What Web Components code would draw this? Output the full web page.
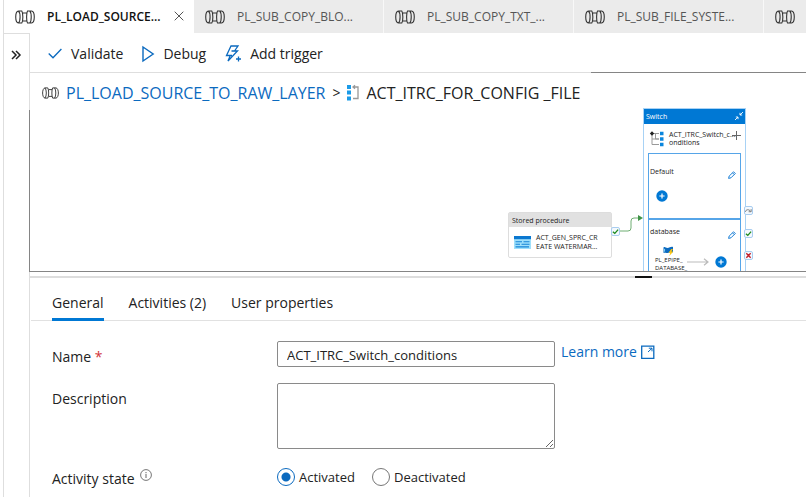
<!DOCTYPE html>
<html lang="en">
<head>
<meta charset="utf-8">
<title>Pipeline editor</title>
<style>
  body { margin: 0; font: 14px/20px "Open Sans", "Noto Sans", sans-serif; color: #222; background: #fff; --blue: #0b6abf; --line: #dedede; }
</style>
</head>
<body>
<pipeline-editor></pipeline-editor>
<script>
const ICONS = {
  pipeline: ['0 0 20 14', `<g fill="none" stroke="#333" stroke-width="1.1"><path d="M3.500 1C-.2 1.500-.2 12.500 3.500 13M3.500 1H6.800C8.200 3 8.200 11 6.800 13H3.500M3.500 1C5.600 3 5.600 11 3.500 13M8 3H12M8 11H12M16.500 1H12.500C11.300 3 11.300 11 12.500 13H16.500M14.800 1C16.700 3 16.700 11 14.800 13M16.500 1C20.200 1.500 20.200 12.500 16.500 13"/></g>`],
  close: ['0 0 10 10', `<path d="M.7.7 9.300 9.300M9.300.7.7 9.300" stroke="#555" fill="none"/>`],
  chevrons: ['0 0 10 10', `<path d="M1 1 5 5 1 9M5 1 9 5 5 9" stroke="#222" stroke-width="1.500" fill="none"/>`],
  check: ['0 0 14 11', `<path d="M.7 5.500 5 9.800 13.400 1" stroke="#0b6abf" stroke-width="1.300" fill="none"/>`],
  play: ['0 0 12 16', `<path d="M1 1V15L11.200 8Z" stroke="#0b6abf" stroke-width="1.400" fill="none"/>`],
  trigger: ['0 0 16 18', `<path d="M6 1H13L9.500 6H12.500L3 16 5.300 10.500H1.500ZM6.500 6H9.500M4 10.500H7M11 14H16M13.500 11.500V16.500" stroke="#0b6abf" stroke-width="1.300" fill="none"/>`],
  loop: ['0 0 12 16', `<path d="M0 0H4V4H0ZM0 5.500H4V9.500H0ZM0 11.500H4V15.500H0Z" fill="#1b9be8"/><path d="M6 2H11V13.500H6M8 .3 6 2 8 3.700" stroke="#999" stroke-width="1.300" fill="none"/>`],
  external: ['0 0 14 14', `<path d="M.7 1.200H12.800V13.300H.7Z" stroke="#0b6abf" stroke-width="1.300" fill="none"/><path d="M7 7 11 3.200M7.800 3.200H11V6.300" stroke="#0b6abf" fill="none"/>`],
  info: ['0 0 12 12', `<circle cx="6" cy="6" r="5.400" stroke="#666" stroke-width=".9" fill="none"/><path d="M6 5V9M6 3V4.200" stroke="#666"/>`],
  collapse: ['0 0 8 8', `<path d="M8 0 5 3M5 .8V3H7.200M0 8 3 5M.8 5H3V7.200" stroke="#fff" stroke-width=".9" fill="none"/>`],
  branch: ['0 0 14 16', `<path d="M2 2.500H9M2 2.500V13.500H9M5.500 2.500V8H9M2 8H9" stroke="#999" fill="none"/><path d="M2 .3 4.200 2.500 2 4.700-.2 2.500Z" fill="#222"/><path d="M10 .8H13.500V4.300H10ZM10 6.300H13.500V9.800H10ZM10 11.800H13.500V15.300H10Z" fill="#0b86dd"/>`],
  plus: ['0 0 9 9', `<path d="M0 4.500H9M4.500 0V9" stroke="#666" fill="none"/>`],
  pencil: ['0 0 8 8', `<path d="M.6 7.400 1.200 5 5.600.8 7.300 2.500 3 6.800ZM4.500 1.800 6.200 3.500" stroke="#1a7fd6" fill="none"/>`],
  add: ['0 0 12 12', `<circle cx="6" cy="6" r="5.700" fill="#0078d4"/><path d="M3.400 6H8.600M6 3.400V8.600" stroke="#fff" stroke-width="1.200"/>`],
  table: ['0 0 17 13', `<path d="M0 0H17V13H0Z" fill="#9fe0fb"/><path d="M0 0H17V3.200H0Z" fill="#0b78d0"/><path d="M1.500 5.700H8M9.500 5.700H15.500M1.500 8.300H6M7.500 8.300H15.500M1.500 10.900H15" stroke="#1684d8" stroke-width="1.100"/>`],
  run: ['0 0 11 10', `<path d="M.5 1.500C2 .2 2.500 2 4.500 2S8 .2 10 1V6.500C8 6 7 7 4.500 7S2 6.500.5 7Z" fill="#0b6abf"/><path d="M1 3C2.500 2 2.500 6 1 6Z" fill="#7fd0f5"/><path d="M8.300 3 5.500 6.800H7.300L6.300 10 10.300 5.500H8.300L10 3Z" fill="#ffc60a"/>`],
  arrow: ['0 0 22 8', `<path d="M0 4H21M17 .7 21 4 17 7.300" stroke="#bbb" stroke-width="1.200" fill="none"/>`],
  skip: ['0 0 8 8', `<path d="M.5 5.500C1 2.500 4.500 2.300 6.500 5M7 2.500V5.400H4.200" stroke="#777" stroke-width="1.100" fill="none"/>`],
  ok: ['0 0 8 8', `<path d="M1 4.200 3.200 6.200 7 1.800" stroke="#1d8a1d" stroke-width="1.500" fill="none"/>`],
  fail: ['0 0 8 8', `<path d="M1.500 1.500 6.500 6.500M6.500 1.500 1.500 6.500" stroke="#c3202b" stroke-width="1.600" fill="none"/>`],
  link: ['0 0 24 19', `<path d="M0 16H9Q12 16 12 13V6Q12 3 15 3H20" stroke="#6fae72" fill="none"/><path d="M19 0V6L24 3Z" fill="#3f9346"/>`]
};

function define(name, html, setup) {
  const t = document.createElement('template');
  t.innerHTML = `<style>*{box-sizing:border-box}:host{box-sizing:border-box}button{font:inherit;color:inherit;border:0;background:none;padding:0;margin:0}a{color:var(--blue);text-decoration:none}</style>` + html;
  customElements.define(name, class extends HTMLElement {
    connectedCallback() {
      if (this.shadowRoot) return;
      const root = this.attachShadow({ mode: 'open' });
      root.append(t.content.cloneNode(true));
      if (setup) setup(this, root);
    }
  });
}

define('ui-icon', `<style>:host{display:inline-block;flex:none;line-height:0}svg{display:block;overflow:visible}</style>`, (el, root) => {
  const [box, art] = ICONS[el.getAttribute('name')];
  const [, , w, h] = box.split(' ');
  const width = +(el.getAttribute('width') || w);
  root.innerHTML += `<svg aria-hidden="true" viewBox="${box}" width="${width}" height="${Math.round(width * h / w)}">${art}</svg>`;
});

define('file-tab', `<style>
  :host{display:block;flex:0 0 190px;height:33px;background:#ebebeb;border-right:1px solid #f8f8f8;font-size:12px;color:#555}
  :host([active]){background:#fff;color:#111;font-weight:600;border-color:#fff}
  div{display:flex;align-items:center;height:100%;padding:0 9px 0 11px}
  .open{display:flex;align-items:center;gap:12px;flex:1;min-width:0;white-space:nowrap}
  .x{display:none;padding:2px 0}
  :host([active]) .x{display:block}
</style><div><button class="open" aria-label="Pipeline tab"><ui-icon name="pipeline"></ui-icon><slot></slot></button><button class="x" aria-label="Close tab"><ui-icon name="close"></ui-icon></button></div>`);

define('tool-bar', `<style>
  :host{display:flex;align-items:center;gap:19px;height:39px;padding:2px 18px 0;border-left:1px solid var(--line)}
  button{display:flex;align-items:center;gap:9px}
</style>
<button><ui-icon name="check"></ui-icon>Validate</button>
<button><ui-icon name="play"></ui-icon>Debug</button>
<button><ui-icon name="trigger"></ui-icon>Add trigger</button>`);

define('bread-crumb', `<style>
  :host{display:block;position:relative;width:max-content;background:#fff;border:solid var(--line);border-width:1px 0 0 1px;font-size:16px;line-height:20px}
  nav{display:flex;align-items:center;gap:7px;height:37px;padding:3px 11px 0 12px}
  .sep{font-size:14px}
</style><nav aria-label="Breadcrumb"><ui-icon name="pipeline" width="17"></ui-icon><a href="#pipeline">PL_LOAD_SOURCE_TO_RAW_LAYER</a><span class="sep">&gt;</span><ui-icon name="loop"></ui-icon><span>ACT_ITRC_FOR_CONFIG _FILE</span></nav>`);

define('port-badge', `<style>:host{display:flex;align-items:center;justify-content:center;width:9px;height:9px;border:1px solid #a9cdf0;border-radius:2px;background:#f4f9fe}</style>`, (el, root) => {
  const i = document.createElement('ui-icon');
  i.setAttribute('name', el.getAttribute('kind'));
  i.setAttribute('width', '7');
  root.append(i);
});

define('activity-node', `<style>
  :host{display:block;width:104px;border:1px solid #ddd;border-radius:2px;background:#fff;font-size:7px;line-height:9px}
  header{height:14px;padding:3px;background:#e1e1e1}
  .body{display:flex;align-items:center;gap:5px;height:30px;padding:0 4px 0 5px;white-space:nowrap}
</style><header><slot name="type"></slot></header><div class="body"><ui-icon name="table"></ui-icon><div><slot></slot></div></div>`);

define('switch-case', `<style>
  :host{display:block;height:66px;border:1px solid #56a5e8;font-size:7px;line-height:8px}
  .head{display:flex;justify-content:space-between;align-items:flex-start;height:36px;padding:14px 4px 0 1px}
  :host([compact]) .head{height:26px;padding-top:8px}
  button{padding-top:3px}
</style><div class="head"><slot name="label"></slot><button aria-label="Edit case"><ui-icon name="pencil"></ui-icon></button></div><slot></slot>`);

define('switch-node', `<style>
  :host{display:block;width:103px;border:1px solid #a8d2f5;background:#fff;font-size:7px;line-height:8px}
  header{display:flex;justify-content:space-between;align-items:center;height:15px;padding:0 2px;background:#0078d4;color:#fff}
  .title{display:flex;align-items:center;gap:5px;height:29px;padding:0 4px 0 6px;white-space:nowrap}
  .title div{flex:1;width:0}
  .title ui-icon[name=plus]{padding-bottom:6px}
  .cases{padding:0 4px}
  .add{display:block;margin-left:7px}
  .inner{display:flex;gap:6px;padding-left:6px}
  .inner div{display:flex;flex-direction:column;align-items:flex-start;width:26px;font-size:6px;line-height:8px}
  .inner ui-icon[name=run]{margin-left:8px}
  .inner>ui-icon{margin-top:12px}
  .inner>button{align-self:flex-start;margin-top:10px}
</style>
<header>Switch<button aria-label="Collapse"><ui-icon name="collapse"></ui-icon></button></header>
<div class="title"><ui-icon name="branch"></ui-icon><div>ACT_ITRC_Switch_c...<br>onditions</div><ui-icon name="plus"></ui-icon></div>
<div class="cases">
  <switch-case><span slot="label">Default</span><button class="add" aria-label="Add activity"><ui-icon name="add"></ui-icon></button></switch-case>
  <switch-case compact><span slot="label">database</span><div class="inner"><div><ui-icon name="run"></ui-icon><span>PL_EPIPE_</span><span>DATABASE_</span></div><ui-icon name="arrow"></ui-icon><button aria-label="Add activity"><ui-icon name="add"></ui-icon></button></div></switch-case>
</div>`);

/* Free canvas: nodes, ports and the link sit at their diagram coordinates. */
define('design-canvas', `<style>
  :host{display:block;position:relative;flex:1 0 200px;height:200px;overflow:clip}
  .frame{position:absolute;inset:0;border:solid #858585;border-width:1px 0 1px 1px;pointer-events:none}
  .at{position:absolute;left:var(--x);top:var(--y)}
</style>
<activity-node class="at" style="--x:479px;--y:140px"><span slot="type">Stored procedure</span>ACT_GEN_SPRC_CR<br>EATE WATERMAR...</activity-node>
<ui-icon class="at" name="link" style="--x:590px;--y:143px"></ui-icon>
<port-badge class="at" kind="ok" style="--x:582px;--y:155px"></port-badge>
<switch-node class="at" style="--x:614px;--y:36px"></switch-node>
<port-badge class="at" kind="skip" style="--x:715px;--y:134px"></port-badge>
<port-badge class="at" kind="ok" style="--x:715px;--y:157px"></port-badge>
<port-badge class="at" kind="fail" style="--x:715px;--y:179px"></port-badge>
<div class="frame"></div>
<bread-crumb></bread-crumb>`);

define('pane-splitter', `<style>
  :host{display:block;height:7px;padding:4px 0 0}
  div{height:2px;background:#ddd;padding-left:78%}
  span{display:block;width:17px;height:2px;background:#111}
</style><div role="separator"><span></span></div>`);

define('properties-panel', `<style>
  :host{display:block;border-left:1px solid var(--line)}
  nav{display:flex;gap:25px;height:42px;padding:14px 21px 0;margin-left:1px;border-bottom:1px solid #e1e1e1}
  nav button{display:flex;align-items:flex-start;height:28px;border-bottom:3px solid transparent}
  nav button[aria-selected=true]{border-color:#0078d4}
  form{display:grid;grid-template-columns:225px 1fr;row-gap:16px;padding:20px 22px 8px}
  .l{padding-top:6px}
  .l b{color:#d13438;font-weight:400}
  .l.state{padding-top:4px;display:flex;gap:5px;align-items:flex-start}
  .row{display:flex;gap:6px}
  input[type=text],textarea{display:block;width:278px;height:26px;margin:0;padding:3px 9px 1px;border:1px solid #8a8a8a;border-radius:2px;font:13px/18px "Open Sans","Noto Sans",sans-serif;color:#222;background:#fff}
  textarea{height:66px}
  .row a{display:flex;align-items:center;gap:4px;height:22px}
  .radios{display:flex;gap:17px;font-size:13px}
  .radios label{display:flex;align-items:center;gap:4px;height:24px}
  input[type=radio]{appearance:none;width:18px;height:18px;margin:0;border:1px solid #777;border-radius:50%;background:#fff}
  input[type=radio]:checked{border-color:var(--blue);background:radial-gradient(circle,var(--blue) 0 4px,#fff 5px)}
</style>
<nav role="tablist"><button role="tab" aria-selected="true">General</button><button role="tab">Activities (2)</button><button role="tab">User properties</button></nav>
<form>
  <label class="l" for="name">Name <b>*</b></label>
  <div class="row"><input id="name" type="text" value="ACT_ITRC_Switch_conditions"><a href="#learn">Learn more <ui-icon name="external"></ui-icon></a></div>
  <label class="l" for="desc">Description</label>
  <textarea id="desc"></textarea>
  <div class="l state" id="state"><span>Activity state</span><ui-icon name="info"></ui-icon></div>
  <div class="radios" role="radiogroup" aria-labelledby="state"><label><input type="radio" name="s" checked>Activated</label><label><input type="radio" name="s">Deactivated</label></div>
</form>`);

define('pipeline-editor', `<style>
  :host{display:flex;flex-direction:column;min-height:100vh;margin-left:3px;border-left:1px solid var(--line);overflow-x:clip}
  .tabs{display:flex;overflow:hidden}
  .work{display:flex;flex:1}
  .rail{flex:0 0 25px;border-top:1px solid var(--line)}
  .rail button{display:block;margin:11px 0 0 7px}
  main{display:flex;flex-direction:column;flex:1;min-width:0}
  pane-splitter{border-left:1px solid var(--line)}
</style>
<div class="tabs"><file-tab active>PL_LOAD_SOURCE...</file-tab><file-tab>PL_SUB_COPY_BLO...</file-tab><file-tab>PL_SUB_COPY_TXT_...</file-tab><file-tab>PL_SUB_FILE_SYSTE...</file-tab><file-tab></file-tab></div>
<div class="work">
  <div class="rail"><button aria-label="Expand"><ui-icon name="chevrons"></ui-icon></button></div>
  <main><tool-bar></tool-bar><design-canvas></design-canvas><pane-splitter></pane-splitter><properties-panel></properties-panel></main>
</div>`);
</script>
</body>
</html>
